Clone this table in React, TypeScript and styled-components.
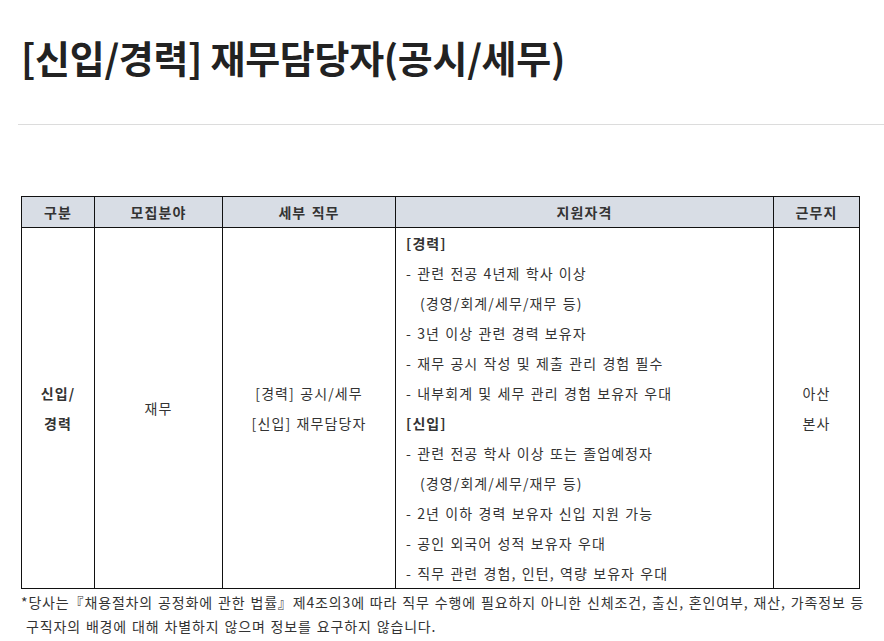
import styled, { createGlobalStyle } from "styled-components"

const career = [
	"- 관련 전공 4년제 학사 이상",
	"(경영/회계/세무/재무 등)",
	"- 3년 이상 관련 경력 보유자",
	"- 재무 공시 작성 및 제출 관리 경험 필수",
	"- 내부회계 및 세무 관리 경험 보유자 우대",
]

const newcomer = [
	"- 관련 전공 학사 이상 또는 졸업예정자",
	"(경영/회계/세무/재무 등)",
	"- 2년 이하 경력 보유자 신입 지원 가능",
	"- 공인 외국어 성적 보유자 우대",
	"- 직무 관련 경험, 인턴, 역량 보유자 우대",
]

const columns = [73, 128, 173, 378, 86]

export default function App() {
	return (
		<>
			<Global />
			<Page>
				<Title>[신입/경력] 재무담당자(공시/세무)</Title>
				<Divider />
				<Table>
					<colgroup>
						{columns.map((w, i) => (
							<Col key={i} $w={w} />
						))}
					</colgroup>
					<thead>
						<tr>
							<Th>구분</Th>
							<Th>모집분야</Th>
							<Th>세부 직무</Th>
							<Th>지원자격</Th>
							<Th>근무지</Th>
						</tr>
					</thead>
					<tbody>
						<tr>
							<Td $bold>
								신입/
								<br />
								경력
							</Td>
							<Td>재무</Td>
							<Td>
								[경력] 공시/세무
								<br />
								[신입] 재무담당자
							</Td>
							<Td $left>
								<Line $bold>[경력]</Line>
								{career.map((t, i) => (
									<Line key={i} $indent={t.startsWith("(")}>
										{t}
									</Line>
								))}
								<Line $bold>[신입]</Line>
								{newcomer.map((t, i) => (
									<Line key={i} $indent={t.startsWith("(")}>
										{t}
									</Line>
								))}
							</Td>
							<Td>
								아산
								<br />
								본사
							</Td>
						</tr>
					</tbody>
				</Table>
				<Note>
					*당사는『채용절차의 공정화에 관한 법률』제4조의3에 따라 직무 수행에 필요하지 아니한 신체조건, 출신, 혼인여부, 재산, 가족정보 등
					<br />
					&nbsp;구직자의 배경에 대해 차별하지 않으며 정보를 요구하지 않습니다.
				</Note>
			</Page>
		</>
	)
}

//style

const Global = createGlobalStyle`
	body {
		margin: 0;
		background: #fff;
		font-family: "Noto Sans CJK KR", "Noto Sans", sans-serif;
		color: #333;
	}
`

const Page = styled.div`
	padding: 22px 0 0 21px;
	overflow: hidden;
`

const Title = styled.h1`
	margin: 0;
	font-size: 38px;
	line-height: 70px;
	font-weight: 700;
	color: #222;
	letter-spacing: -0.3px;
`

const Divider = styled.hr`
	margin: 32px 0 71px -3px;
	border: 0;
	border-top: 1px solid #dcdcdc;
	width: 880px;
`

const Table = styled.table`
	width: 838px;
	border-collapse: collapse;
	table-layout: fixed;
	font-size: 14px;
	color: #333;
	letter-spacing: 1.1px;
	word-spacing: 1px;
`

const Col = styled.col<{ $w: number }>`
	width: ${(p) => p.$w}px;
`

const Th = styled.th`
	height: 30px;
	padding: 0;
	border: 1px solid #111;
	background: #d8dde5;
	font-weight: 700;
	font-size: 14px;
	color: #333;
`

const Td = styled.td<{ $bold?: boolean; $left?: boolean }>`
	padding: ${(p) => (p.$left ? "0 10px" : "0")};
	border: 1px solid #111;
	text-align: ${(p) => (p.$left ? "left" : "center")};
	vertical-align: middle;
	line-height: 30px;
	font-weight: ${(p) => (p.$bold ? 700 : 400)};
`

const Line = styled.div<{ $bold?: boolean; $indent?: boolean }>`
	line-height: 30px;
	font-weight: ${(p) => (p.$bold ? 700 : 400)};
	padding-left: ${(p) => (p.$indent ? "14px" : "0")};
`

const Note = styled.p`
	margin: 1px 0 0;
	font-size: 14px;
	line-height: 24px;
	color: #333;
	letter-spacing: 0.85px;
	word-spacing: 1px;
	white-space: nowrap;
`
